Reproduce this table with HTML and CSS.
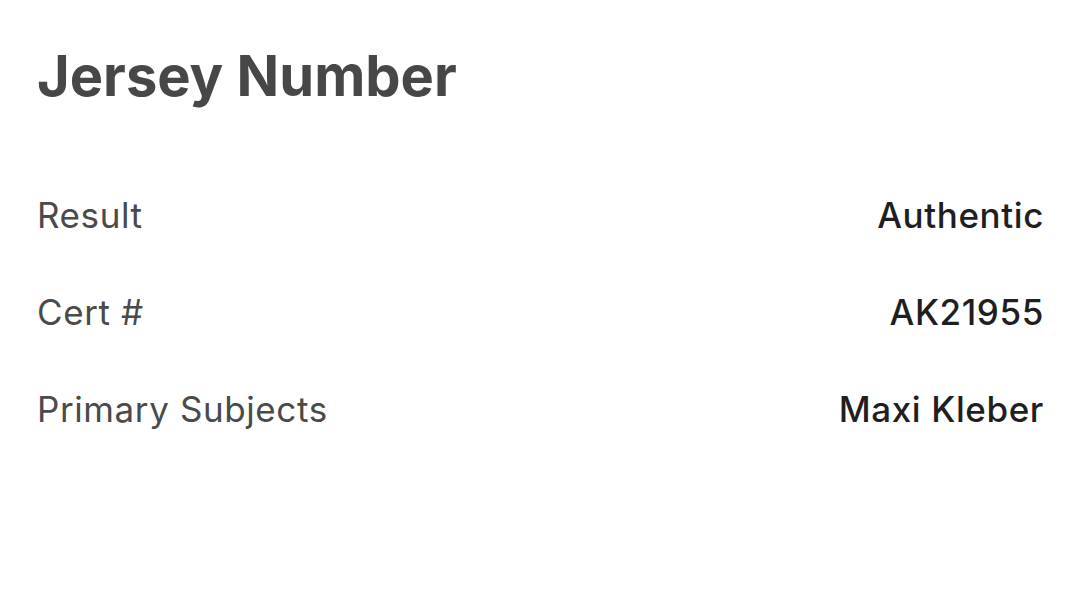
FILE: index.html
```html
<!DOCTYPE html>
<html>
<head>
<meta charset="utf-8">
<link rel="stylesheet" href="styles.css">
</head>
<body>
<main class="card">
  <h1 class="title">Jersey Number</h1>
  <dl class="details">
    <div class="row"><dt>Result</dt><dd>Authentic</dd></div>
    <div class="row"><dt>Cert #</dt><dd>AK21955</dd></div>
    <div class="row"><dt>Primary Subjects</dt><dd>Maxi Kleber</dd></div>
  </dl>
</main>
</body>
</html>
```
FILE: styles.css
```css
html, body {
  margin: 0;
  padding: 0;
  background: #fff;
}
body {
  font-family: Inter, "Noto Sans", sans-serif;
  width: 1080px;
  height: 600px;
  overflow: hidden;
}
.card {
  padding: 43px 36px 0 37px;
}
.title {
  margin: 0;
  font-size: 56px;
  font-weight: 700;
  color: #474747;
  line-height: 66px;
  letter-spacing: 0;
}
.details {
  margin: 86px 0 0 0;
  display: flex;
  flex-direction: column;
  gap: 57px;
}
.row {
  display: flex;
  justify-content: space-between;
  align-items: baseline;
  font-size: 35px;
  line-height: 40px;
  letter-spacing: 0.6px;
}
.row dt {
  color: #4a4a4a;
  font-weight: 400;
}
.row dd {
  margin: 0;
  color: #1f1f1f;
  font-weight: 500;
}
```
